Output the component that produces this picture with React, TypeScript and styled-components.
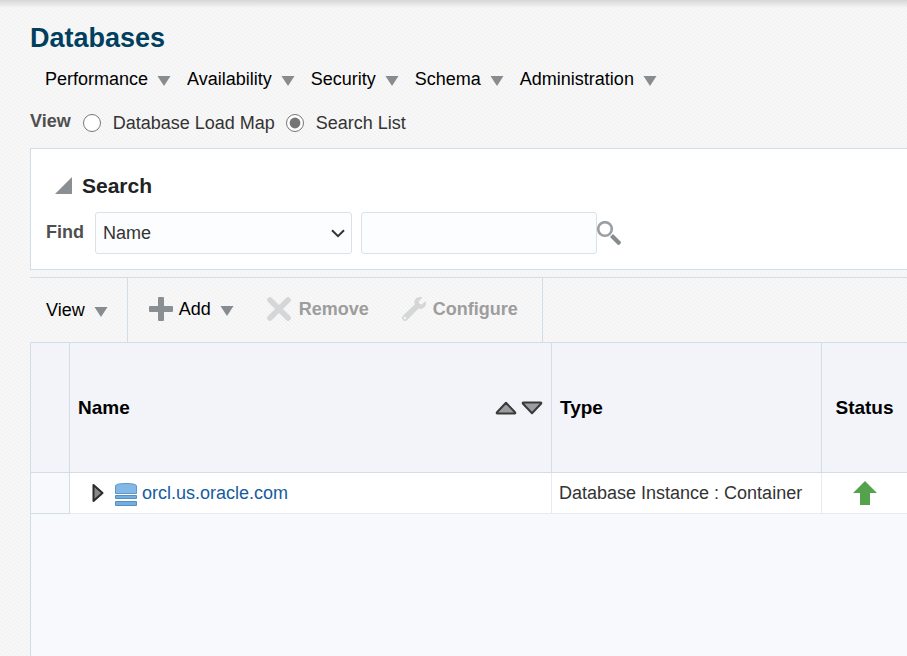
import React, { useState } from "react";
import styled, { createGlobalStyle } from "styled-components";

const line = "#d3dde5";
const softLine = "#e6ebf0";

const GlobalStyle = createGlobalStyle`
  *, *::before, *::after { box-sizing: border-box; }
  html, body, #root { margin: 0; min-height: 100%; }
  body {
    font-family: "Liberation Sans", Arial, sans-serif;
    font-size: 18px;
    line-height: 24px;
    color: #333;
  }
  button, input, select { font: inherit; color: inherit; }
`;

const Page = styled.div`
  display: flex;
  flex-direction: column;
  min-height: 100vh;
  padding-left: 30px;
  overflow-x: hidden;
  background:
    linear-gradient(to bottom, #d6d6d6, rgba(214, 214, 214, 0)) 0 0 / 100% 8px no-repeat,
    linear-gradient(45deg, #f8f8f8 25%, #f3f3f3 25% 50%, #f8f8f8 50% 75%, #f3f3f3 75%) 0 0 / 4px 4px;
`;

const Title = styled.h1`
  margin: 0;
  padding-top: 21px;
  font-size: 27px;
  line-height: 34px;
  color: #003f5e;
`;

const Menu = styled.nav`
  display: flex;
  gap: 16px;
  padding: 12px 0 0 15px;
`;

const MenuButton = styled.button<{ $strong?: boolean; $gap: number }>`
  display: inline-flex;
  align-items: center;
  gap: ${(p) => p.$gap}px;
  padding: 0;
  border: 0;
  background: none;
  color: #000;
  line-height: 24px;
  font-weight: ${(p) => (p.$strong ? "bold" : "normal")};
  white-space: nowrap;

  &:disabled { color: #9d9d9d; }
`;

const MenuLead = styled.span`
  display: inline-flex;
  align-items: center;
  gap: 6px;
`;

const CaretIcon = styled.svg`
  flex: none;
  margin-top: 4px;
`;

const ViewRow = styled.fieldset`
  display: flex;
  align-items: center;
  gap: 12px;
  margin: 0;
  padding: 18px 0 11px;
  border: 0;
`;

const FieldName = styled.span`
  padding-bottom: 4px;
  font-weight: bold;
  color: #4f4f4f;
`;

const Choices = styled.div`
  display: flex;
  gap: 11px;
`;

const Choice = styled.label`
  display: inline-flex;
  align-items: center;
  gap: 12px;
`;

const Radio = styled.input`
  width: 18px;
  height: 18px;
  margin: 0;
  accent-color: #757575;
`;

const SearchPanel = styled.section`
  padding: 24px 0 15px 15px;
  border: 1px solid ${line};
  border-right: 0;
  background: #fff;
`;

const SearchHeading = styled.h2`
  display: flex;
  align-items: center;
  gap: 10px;
  margin: 0 0 14px;
  padding-left: 9px;
  font-size: 21px;
  line-height: 25px;
  color: #222;
`;

const IconButton = styled.button`
  display: flex;
  padding: 0;
  border: 0;
  background: none;
`;

const SearchForm = styled.form`
  display: flex;
  align-items: center;
`;

const FindLabel = styled.label`
  margin-right: 11px;
  padding-bottom: 2px;
  font-weight: bold;
  color: #4f4f4f;
`;

const SelectBox = styled.div`
  display: grid;
  align-items: center;
  width: 257px;
  margin-right: 9px;

  > * { grid-area: 1 / 1; }
  > svg {
    justify-self: end;
    margin-right: 7px;
    pointer-events: none;
  }
`;

const Select = styled.select`
  appearance: none;
  width: 100%;
  height: 42px;
  padding: 0 24px 0 7px;
  border: 1px solid #dbe1e6;
  border-radius: 3px;
  background: #fcfdff;
`;

const TextBox = styled.input`
  width: 236px;
  height: 42px;
  padding: 0 8px;
  border: 1px solid #dbe1e6;
  border-radius: 3px;
  background: #fcfdff;
`;

const Toolbar = styled.div`
  display: flex;
  margin-top: 7px;
  height: 65px;
  border-top: 1px solid ${line};
`;

const ToolGroup = styled.div<{ $first?: boolean }>`
  display: flex;
  align-items: center;
  gap: 33px;
  padding: 0 ${(p) => (p.$first ? "19px 0 16px" : "24px 2px 21px")};
  border-right: 1px solid ${line};
`;

const Grid = styled.main`
  flex: 1;
  border-left: 1px solid ${line};
  border-top: 1px solid ${line};
  background: #f7f9fd;
`;

const Table = styled.table`
  width: 100%;
  table-layout: fixed;
  border-collapse: separate;
  border-spacing: 0;
`;

const Col = styled.col<{ $w?: number }>`
  width: ${(p) => (p.$w ? `${p.$w}px` : "auto")};
`;

const HeadCell = styled.th<{ $center?: boolean }>`
  height: 130px;
  padding: 0 ${(p) => (p.$center ? 0 : 8)}px;
  border-right: 1px solid ${line};
  border-bottom: 1px solid ${line};
  background: #f2f4f9;
  color: #000;
  font-size: 19px;
  text-align: ${(p) => (p.$center ? "center" : "left")};

  &:last-child { border-right: 0; }
`;

const HeadContent = styled.div`
  display: flex;
  justify-content: space-between;
  align-items: center;
`;

const SortButtons = styled.span`
  display: flex;
  gap: 4px;
`;

const Cell = styled.td<{ $center?: boolean; $row?: boolean }>`
  height: 41px;
  padding: 0 ${(p) => (p.$center || p.$row ? 0 : 7)}px;
  border-right: 1px solid ${(p) => (p.$row ? line : softLine)};
  border-bottom: 1px solid ${(p) => (p.$row ? line : softLine)};
  background: ${(p) => (p.$row ? "#f7f9fd" : "#fff")};
  text-align: ${(p) => (p.$center ? "center" : "left")};
  white-space: nowrap;

  &:last-child { border-right: 0; }
  > svg { display: block; margin: 0 auto; }
`;

const NameContent = styled.div`
  display: flex;
  align-items: center;
  padding-left: 15px;
`;

const DbLink = styled.a`
  margin-left: 5px;
  color: #145c9e;
  text-decoration: none;
`;

const DbIcon = styled.svg`
  margin: 2px 0 0 11px;
`;

const Caret = () => (
  <CaretIcon width="14" height="10" viewBox="0 0 14 10" aria-hidden="true">
    <path d="M.5 0h13L7 10z" fill="#878c90" />
  </CaretIcon>
);

const PlusIcon = () => (
  <svg width="24" height="24" viewBox="0 0 24 24" aria-hidden="true">
    <path d="M10 0h4q1 0 1 1v8h8q1 0 1 1v4q0 1-1 1h-8v8q0 1-1 1h-4q-1 0-1-1v-8H1q-1 0-1-1v-4q0-1 1-1h8V1q0-1 1-1z" fill="#8a8f93" />
  </svg>
);

const CrossIcon = () => (
  <svg width="24" height="24" viewBox="0 0 24 24" aria-hidden="true">
    <path d="M3 3l18 18M21 3L3 21" stroke="#d4d6d7" strokeWidth="5.600" strokeLinecap="round" />
  </svg>
);

const WrenchIcon = () => (
  <svg width="24" height="24" viewBox="0 0 24 24" aria-hidden="true">
    <path
      fillRule="evenodd"
      fill="#d4d6d7"
      d="M20.500 .5C17.500-.6 14.500 .3 13.200 2.400c-1 1.700-1.100 3.500-.5 5.100L1 18.800c-1.300 1.300-1.300 3-.1 4.200 1.200 1.300 3 1.200 4.300-.1L16.600 11.400c2.200 .7 4.500 .2 6-1.500 1.400-1.500 1.700-3.900 1-6l-3.700 3.600-2.500-.7-.6-2.500zM3 19.800a1.300 1.300 0 1 1 0 2.600 1.300 1.300 0 0 1 0-2.600z"
    />
  </svg>
);

const SearchIcon = () => (
  <svg width="24" height="24" viewBox="0 0 24 24" aria-hidden="true">
    <circle cx="8" cy="8" r="6.800" fill="none" stroke="#9b9fa2" strokeWidth="2.600" />
    <path d="M14.500 14.500L23 23" stroke="#858b8f" strokeWidth="4.200" />
  </svg>
);

const SortIcon = ({ down }: { down?: boolean }) => (
  <svg width="22" height="14" viewBox="0 0 22 14" aria-hidden="true">
    <path
      d={down ? "M2.500 1.500h17q1.400 0 .5 1.300L11 12.200 2 2.800Q1.100 1.500 2.500 1.500z" : "M2.500 12.500h17q1.400 0 .5-1.300L11 1.800 2 11.200Q1.100 12.500 2.500 12.500z"}
      fill="#9a9ea1"
      stroke="#3a3a3a"
      strokeWidth="2"
      strokeLinejoin="round"
    />
  </svg>
);

const menus = ["Performance", "Availability", "Security", "Schema", "Administration"];

export default function App() {
  const [view, setView] = useState("list");
  return (
    <>
      <GlobalStyle />
      <Page>
        <Title>Databases</Title>
        <Menu>
          {menus.map((name) => (
            <MenuButton key={name} type="button" $gap={9}>
              {name}
              <Caret />
            </MenuButton>
          ))}
        </Menu>
        <ViewRow aria-label="View">
          <FieldName>View</FieldName>
          <Choices>
            <Choice>
              <Radio type="radio" name="view" checked={view === "map"} onChange={() => setView("map")} />
              Database Load Map
            </Choice>
            <Choice>
              <Radio type="radio" name="view" checked={view === "list"} onChange={() => setView("list")} />
              Search List
            </Choice>
          </Choices>
        </ViewRow>

        <SearchPanel>
          <SearchHeading>
            <IconButton type="button" aria-label="Collapse search">
              <svg width="17" height="17" viewBox="0 0 17 17" aria-hidden="true">
                <path d="M17 0v17H0z" fill="#8a8f93" />
              </svg>
            </IconButton>
            Search
          </SearchHeading>
          <SearchForm onSubmit={(e) => e.preventDefault()}>
            <FindLabel htmlFor="find-field">Find</FindLabel>
            <SelectBox>
              <Select id="find-field">
                <option>Name</option>
              </Select>
              <svg width="14" height="9" viewBox="0 0 14 9" aria-hidden="true">
                <path d="M1 1.200l6 6 6-6" fill="none" stroke="#333" strokeWidth="2" />
              </svg>
            </SelectBox>
            <TextBox type="text" aria-label="Search text" />
            <IconButton type="submit" aria-label="Search">
              <SearchIcon />
            </IconButton>
          </SearchForm>
        </SearchPanel>

        <Toolbar role="toolbar">
          <ToolGroup $first>
            <MenuButton type="button" $gap={9}>
              View
              <Caret />
            </MenuButton>
          </ToolGroup>
          <ToolGroup>
            <MenuButton type="button" $gap={9}>
              <MenuLead>
                <PlusIcon />
                Add
              </MenuLead>
              <Caret />
            </MenuButton>
            <MenuButton type="button" $strong $gap={8} disabled>
              <CrossIcon />
              Remove
            </MenuButton>
            <MenuButton type="button" $strong $gap={7} disabled>
              <WrenchIcon />
              Configure
            </MenuButton>
          </ToolGroup>
        </Toolbar>

        <Grid>
          <Table>
            <colgroup>
              <Col $w={39} />
              <Col $w={482} />
              <Col $w={270} />
              <Col />
            </colgroup>
            <thead>
              <tr>
                <HeadCell aria-label="Row" />
                <HeadCell scope="col">
                  <HeadContent>
                    Name
                    <SortButtons>
                      <IconButton type="button" aria-label="Sort ascending">
                        <SortIcon />
                      </IconButton>
                      <IconButton type="button" aria-label="Sort descending">
                        <SortIcon down />
                      </IconButton>
                    </SortButtons>
                  </HeadContent>
                </HeadCell>
                <HeadCell scope="col">Type</HeadCell>
                <HeadCell scope="col" $center>Status</HeadCell>
              </tr>
            </thead>
            <tbody>
              <tr>
                <Cell $row />
                <Cell>
                  <NameContent>
                    <IconButton type="button" aria-label="Expand orcl.us.oracle.com">
                      <svg width="12" height="20" viewBox="0 0 12 20" aria-hidden="true">
                        <path d="M1.500 2v16L10.500 10z" fill="#85898c" stroke="#2b2b2b" strokeWidth="2" strokeLinejoin="round" />
                      </svg>
                    </IconButton>
                    <DbIcon width="22" height="23" viewBox="0 0 22 23" aria-hidden="true">
                      <path d="M.5 10.500V3Q.5 .5 11 .5T21.500 3v7.500z" fill="#82b7e6" stroke="#5f98c8" />
                      <path d="M.5 12.500h21v3H.5zM.5 18.500h21v4H.5z" fill="#72addf" stroke="#5790c0" />
                    </DbIcon>
                    <DbLink href="#orcl">orcl.us.oracle.com</DbLink>
                  </NameContent>
                </Cell>
                <Cell>Database Instance : Container</Cell>
                <Cell $center>
                  <svg width="24" height="24" viewBox="0 0 24 24" role="img" aria-label="Up">
                    <path d="M12 0L24 12H17v12H7V12H0z" fill="#54a24c" />
                  </svg>
                </Cell>
              </tr>
            </tbody>
          </Table>
        </Grid>
      </Page>
    </>
  );
}
